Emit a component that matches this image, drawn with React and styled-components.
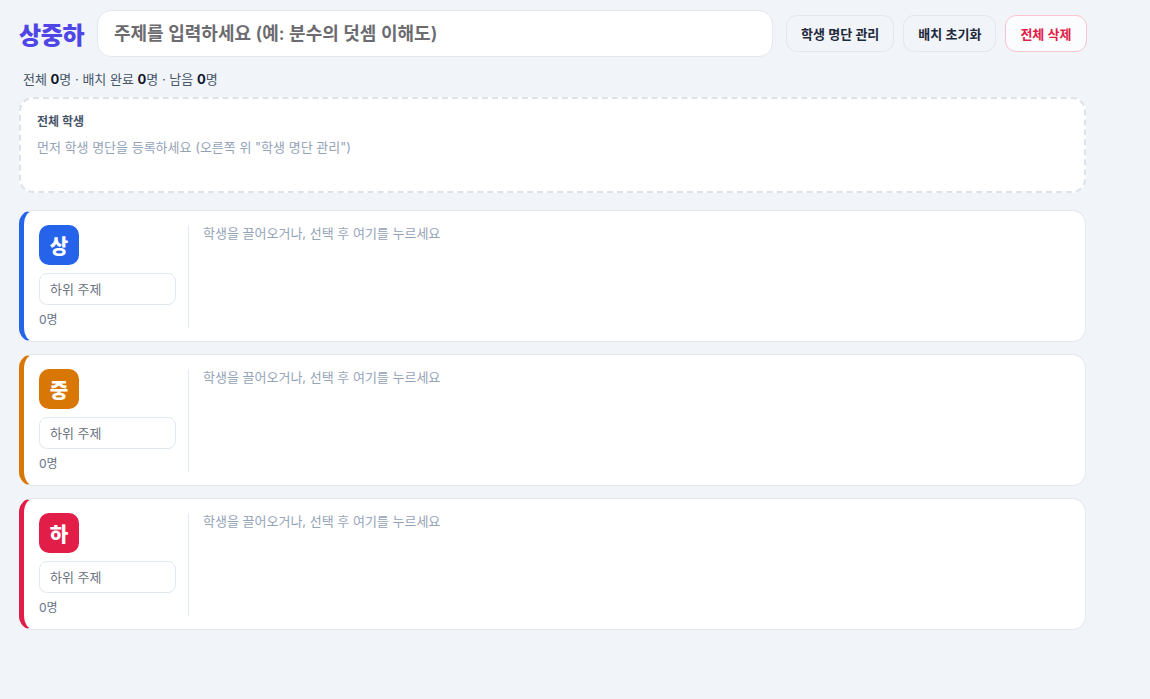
import React from 'react'
import styled, { createGlobalStyle } from 'styled-components'

const GlobalStyle = createGlobalStyle`
  html, body {
    margin: 0;
    padding: 0;
    background: #f1f4f8;
    font-family: Inter, "Noto Sans CJK KR", sans-serif;
    color: #0f172a;
  }
  * { box-sizing: border-box; }
`

const levels = [
  { label: '상', color: '#2563eb' },
  { label: '중', color: '#d97706' },
  { label: '하', color: '#e11d48' },
]

function LevelCard(props) {
  return (
    <Card accent={props.color}>
      <Side>
        <Badge bg={props.color}>{props.label}</Badge>
        <SubInput placeholder="하위 주제" />
        <Count>0명</Count>
      </Side>
      <DropZone>학생을 끌어오거나, 선택 후 여기를 누르세요</DropZone>
    </Card>
  )
}

function App() {
  return (
    <Page>
      <GlobalStyle />
      <Header>
        <Title>상중하</Title>
        <TopicInput placeholder="주제를 입력하세요 (예: 분수의 덧셈 이해도)" />
        <Actions>
          <Button>학생 명단 관리</Button>
          <Button>배치 초기화</Button>
          <Button danger>전체 삭제</Button>
        </Actions>
      </Header>
      <Stats>
        전체 <b>0</b>명 · 배치 완료 <b>0</b>명 · 남음 <b>0</b>명
      </Stats>
      <Pool>
        <PoolTitle>전체 학생</PoolTitle>
        <PoolHint>먼저 학생 명단을 등록하세요 (오른쪽 위 "학생 명단 관리")</PoolHint>
      </Pool>
      <Levels>
        {levels.map((l) => (
          <LevelCard key={l.label} label={l.label} color={l.color} />
        ))}
      </Levels>
    </Page>
  )
}

export default App

const Page = styled.div`
  width: 1105px;
  padding: 10px 19px 40px 19px;
`

const Header = styled.div`
  display: flex;
  align-items: center;
`

const Title = styled.h1`
  margin: 0;
  font-size: 24px;
  font-weight: 800;
  color: #4f46e5;
  letter-spacing: -0.3px;
  white-space: nowrap;
  width: 78px;
  flex-shrink: 0;
`

const TopicInput = styled.input`
  flex-shrink: 0;
  width: 676px;
  height: 47px;
  border: 1px solid #e2e8f0;
  border-radius: 14px;
  background: #fff;
  padding: 0 16px;
  font-family: inherit;
  font-size: 18px;
  font-weight: 600;
  outline: none;
  &::placeholder {
    color: #6b6b70;
  }
`

const Actions = styled.div`
  display: flex;
  gap: 9px;
  margin-left: 13px;
  flex-shrink: 0;
`

const Button = styled.button`
  height: 37px;
  padding: 0 14px;
  border-radius: 11px;
  white-space: nowrap;
  font-family: inherit;
  font-size: 13px;
  font-weight: 600;
  border: 1px solid ${(p) => (p.danger ? '#fbc4cf' : '#e2e8f0')};
  background: ${(p) => (p.danger ? '#fbfcfd' : '#f1f4f8')};
  color: ${(p) => (p.danger ? '#e11d48' : '#1e293b')};
  cursor: pointer;
`

const Stats = styled.div`
  margin: 12px 0 9px 4px;
  font-size: 13px;
  color: #475569;
  b {
    color: #0f172a;
    font-weight: 700;
  }
`

const Pool = styled.div`
  width: 1067px;
  height: 96px;
  background: #fff;
  border: 2px dashed #dbe2ea;
  border-radius: 14px;
  padding: 13px 16px;
`

const PoolTitle = styled.div`
  font-size: 12px;
  font-weight: 700;
  color: #475569;
`

const PoolHint = styled.div`
  margin-top: 8px;
  font-size: 13px;
  color: #94a3b8;
`

const Levels = styled.div`
  margin-top: 17px;
  display: flex;
  flex-direction: column;
  gap: 12px;
`

const Card = styled.div`
  width: 1067px;
  display: flex;
  background: #fff;
  border: 1px solid #e2e8f0;
  border-left: 5px solid ${(p) => p.accent};
  border-radius: 14px;
  padding: 14px 0 13px 15px;
`

const Side = styled.div`
  width: 150px;
  padding-right: 12px;
  border-right: 1px solid #e2e8f0;
  display: flex;
  flex-direction: column;
  align-items: flex-start;
`

const Badge = styled.div`
  width: 40px;
  height: 40px;
  flex-shrink: 0;
  border-radius: 10px;
  background: ${(p) => p.bg};
  color: #fff;
  font-size: 20px;
  font-weight: 800;
  display: flex;
  align-items: center;
  justify-content: center;
`

const SubInput = styled.input`
  margin-top: 8px;
  width: 137px;
  height: 32px;
  flex-shrink: 0;
  border: 1px solid #e2e8f0;
  border-radius: 8px;
  padding: 0 10px;
  font-family: inherit;
  font-size: 13px;
  outline: none;
  &::placeholder {
    color: #6b7280;
  }
`

const Count = styled.div`
  margin-top: 7px;
  line-height: 16px;
  font-size: 12px;
  color: #64748b;
`

const DropZone = styled.div`
  flex: 1;
  padding: 0 14px;
  margin-top: -2px;
  font-size: 13px;
  color: #94a3b8;
`
